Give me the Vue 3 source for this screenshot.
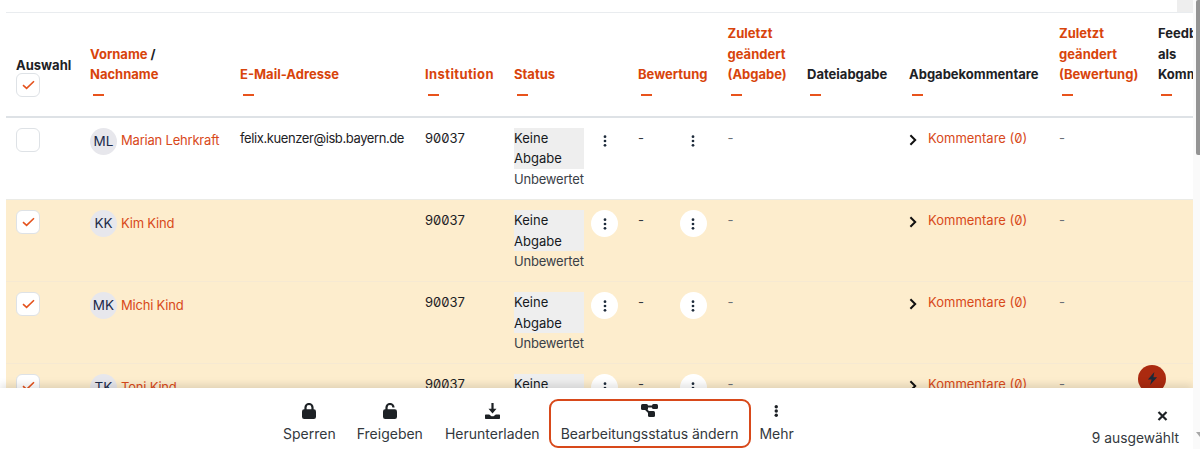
<script setup>
const columns = [
  { lines: ['Auswahl'], kind: 'check' },
  { lines: ['Vorname /', 'Nachname'], link: true },
  { lines: ['E-Mail-Adresse'], link: true },
  { lines: ['Institution'], link: true, spread: true },
  { lines: ['Status'], link: true },
  { lines: ['Bewertung'], link: true },
  { lines: ['Zuletzt', 'geändert', '(Abgabe)'], link: true },
  { lines: ['Dateiabgabe'] },
  { lines: ['Abgabekommentare'] },
  { lines: ['Zuletzt', 'geändert', '(Bewertung)'], link: true },
  { lines: ['Feedback', 'als', 'Kommentar'] },
]
const rows = [
  { initials: 'ML', name: 'Marian Lehrkraft', email: 'felix.kuenzer@isb.bayern.de', selected: false },
  { initials: 'KK', name: 'Kim Kind', email: '', selected: true },
  { initials: 'MK', name: 'Michi Kind', email: '', selected: true },
  { initials: 'TK', name: 'Toni Kind', email: '', selected: true },
]
</script>

<template>
  <div class="page">
    <div class="top-strip"><span class="top-tab"></span></div>
    <div class="table-wrap">
      <table class="grid">
        <colgroup>
          <col class="c1" /><col class="c2" /><col class="c3" /><col class="c4" /><col class="c5" /><col class="c6" />
          <col class="c7" /><col class="c8" /><col class="c9" /><col class="c10" /><col class="c11" />
        </colgroup>
        <thead>
          <tr>
            <th v-for="(col, i) in columns" :key="i" :class="{ spread: col.spread }">
              <div class="th-stack">
                <template v-if="col.kind === 'check'">
                  <div class="th-line">{{ col.lines[0] }}</div>
                  <span class="box head-box">
                    <svg viewBox="0 0 13 10" class="tick"><path d="M1 5.200 4.600 8.400 12 1.200" /></svg>
                  </span>
                </template>
                <template v-else>
                  <div v-for="(line, j) in col.lines" :key="j" class="th-line">
                    <template v-if="line === 'Vorname /'"><span class="orange">Vorname</span> /</template>
                    <span v-else :class="{ orange: col.link }">{{ line }}</span>
                  </div>
                  <span class="sort-dash"></span>
                </template>
              </div>
            </th>
          </tr>
        </thead>
        <tbody>
          <tr v-for="row in rows" :key="row.initials" :class="{ selected: row.selected }">
            <td>
              <span class="box">
                <svg v-if="row.selected" viewBox="0 0 13 10" class="tick"><path d="M1 5.200 4.600 8.400 12 1.200" /></svg>
              </span>
            </td>
            <td>
              <div class="person">
                <span class="avatar">{{ row.initials }}</span>
                <a class="orange-link name">{{ row.name }}</a>
              </div>
            </td>
            <td class="mail">{{ row.email }}</td>
            <td class="inst">90037</td>
            <td>
              <div class="status-cell">
                <div class="status-text">
                  <div class="status-tag">Keine Abgabe</div>
                  <div class="status-sub">Unbewertet</div>
                </div>
                <span class="kebab">
                  <svg viewBox="0 0 4 14" class="dots"><circle cx="2" cy="2" r="1.600" /><circle cx="2" cy="7" r="1.600" /><circle cx="2" cy="12" r="1.600" /></svg>
                </span>
              </div>
            </td>
            <td>
              <div class="grade-cell">
                <span class="dash">-</span>
                <span class="kebab">
                  <svg viewBox="0 0 4 14" class="dots"><circle cx="2" cy="2" r="1.600" /><circle cx="2" cy="7" r="1.600" /><circle cx="2" cy="12" r="1.600" /></svg>
                </span>
              </div>
            </td>
            <td><span class="dash muted">-</span></td>
            <td></td>
            <td>
              <div class="comments">
                <svg viewBox="0 0 8 12" class="chev"><path d="M1.400 1.200 6.200 6 1.400 10.800" /></svg>
                <a class="orange-link">Kommentare (0)</a>
              </div>
            </td>
            <td><span class="dash muted">-</span></td>
            <td></td>
          </tr>
        </tbody>
      </table>
    </div>

    <span class="fab">
      <svg viewBox="0 0 12 14" class="bolt"><path d="M8 0 1 8h4L3.400 14 11 5.600H7z" /></svg>
    </span>

    <div class="action-bar">
      <div class="actions">
        <button class="action">
          <svg viewBox="0 0 14 16" class="icon">
            <rect x="0" y="6.200" width="14" height="9.800" rx="2.200" />
            <path class="line" d="M3.500 7V4.500a3.500 3.500 0 0 1 7 0V7" />
          </svg>
          <span>Sperren</span>
        </button>
        <button class="action">
          <svg viewBox="0 0 14 16" class="icon">
            <rect x="0" y="6.200" width="14" height="9.800" rx="2.200" />
            <path class="line" d="M3.500 7V4.500a3.500 3.500 0 0 1 7 0" />
          </svg>
          <span>Freigeben</span>
        </button>
        <button class="action shift">
          <svg viewBox="0 0 15 16" class="icon wide">
            <path d="M6.400 0h2.200v5.800h2.900L7.500 10.400 3.500 5.800h2.900z" />
            <path d="M1 11.400h3.200l2.300 1.800h2l2.300-1.800H14c.6 0 1 .4 1 1V15c0 .6-.4 1-1 1H1c-.6 0-1-.4-1-1v-2.600c0-.6.4-1 1-1z" />
          </svg>
          <span>Herunterladen</span>
        </button>
        <button class="action outlined">
          <svg viewBox="0 0 17 14" class="icon flow">
            <rect x="0" y="1" width="7" height="6" rx="1.500" />
            <rect x="11" y="1" width="6" height="5" rx="1.500" />
            <rect x="7" y="8" width="7" height="6" rx="1.500" />
            <path class="line thin" d="M6 3.500H12M4.500 6 8.500 10" />
          </svg>
          <span>Bearbeitungsstatus ändern</span>
        </button>
        <button class="action more">
          <svg viewBox="0 0 4.500 12" class="icon dots-big"><circle cx="2.250" cy="1.700" r="1.700" /><circle cx="2.250" cy="6" r="1.700" /><circle cx="2.250" cy="10.300" r="1.700" /></svg>
          <span>Mehr</span>
        </button>
      </div>
      <div class="selection">
        <svg viewBox="0 0 10 10" class="close"><path d="M1 1 9 9M9 1 1 9" /></svg>
        <span>9 ausgewählt</span>
      </div>
    </div>

    <div class="scrollbar">
      <span class="thumb"></span>
      <span class="arrow"></span>
    </div>
  </div>
</template>

<style scoped>
.page {
  position: relative;
  width: 1200px;
  height: 449px;
  overflow: hidden;
  background: #fff;
  font-family: Inter, "Liberation Sans", sans-serif;
  font-size: 13px;
  line-height: 20.5px;
  color: #1d2125;
  font-feature-settings: "zero";
}
.top-strip {
  height: 12px;
  display: flex;
  justify-content: flex-end;
  padding-right: 7px;
}
.top-tab {
  width: 16px;
  background: #eee;
}
.table-wrap {
  margin-left: 6px;
  width: 1187px;
  overflow: hidden;
}
.grid {
  table-layout: fixed;
  border-collapse: collapse;
  width: 1240px;
}
.c1 { width: 74px; }
.c2 { width: 150px; }
.c3 { width: 185px; }
.c4 { width: 89px; }
.c5 { width: 124px; }
.c6 { width: 89.5px; }
.c7 { width: 79.5px; }
.c8 { width: 102px; }
.c9 { width: 150px; }
.c10 { width: 99px; }
.c11 { width: 100px; }
th {
  height: 104px;
  box-sizing: border-box;
  padding: 10px 10px 11px;
  text-align: left;
  vertical-align: bottom;
  border-top: 1px solid #e9ecef;
  border-bottom: 2px solid #dee2e6;
  font-weight: 700;
  white-space: nowrap;
  overflow: hidden;
}
th.spread { letter-spacing: 0.4px; }
.th-stack {
  display: flex;
  flex-direction: column;
  align-items: flex-start;
}
.orange { color: #d8440c; }
.sort-dash {
  width: 11px;
  height: 2px;
  margin: 9px 0 9px 3px;
  background: #e8531c;
}
.box {
  display: flex;
  align-items: center;
  justify-content: center;
  width: 24px;
  height: 24px;
  box-sizing: border-box;
  border: 1px solid #dee2e6;
  border-radius: 6px;
  background: #fff;
}
.head-box { margin-top: -3px; margin-bottom: 8px; }
.tick {
  width: 13px;
  height: 10px;
  fill: none;
  stroke: #e4521d;
  stroke-width: 1.600;
}
td {
  height: 82px;
  box-sizing: border-box;
  padding: 10px 10px 0;
  vertical-align: top;
  border-bottom: 1px solid #ebebe6;
  background: #fff;
}
tr:first-child td { height: 83px; }
.selected td {
  background: #fdedcd;
  border-bottom-color: #f6e9d2;
}
.person {
  display: flex;
  align-items: center;
  gap: 4px;
  white-space: nowrap;
}
.name { letter-spacing: -0.200px; padding-bottom: 1px; }
.avatar {
  display: flex;
  align-items: center;
  justify-content: center;
  width: 27px;
  height: 27px;
  border-radius: 50%;
  background: #e7e7ec;
  color: #1b2a4a;
  font-size: 13.500px;
  flex: none;
}
.orange-link { color: #d8491a; }
.mail { white-space: nowrap; letter-spacing: -0.400px; }
.inst { white-space: nowrap; }
.status-cell {
  display: flex;
  align-items: flex-start;
  gap: 7px;
}
.status-text { width: 70px; }
.status-tag { background: #eee; color: #16191c; }
.status-sub { color: #3a4046; white-space: nowrap; letter-spacing: -0.200px; }
.grade-cell {
  display: flex;
  align-items: flex-start;
  gap: 36px;
}
.dash { color: #33383d; }
.muted { color: #6a7076; }
.kebab {
  display: flex;
  align-items: center;
  justify-content: center;
  width: 27px;
  height: 27px;
  border-radius: 50%;
  flex: none;
  background: #fff;
}
.dots {
  width: 4px;
  height: 12px;
  fill: #1d2a3a;
}
.comments {
  display: flex;
  align-items: flex-start;
  gap: 11px;
}
.chev {
  width: 8px;
  height: 12px;
  margin-top: 6px;
  fill: none;
  stroke: #111;
  stroke-width: 2;
}
.fab {
  position: absolute;
  left: 1138px;
  top: 365px;
  width: 28px;
  height: 28px;
  border-radius: 50%;
  background: #ab2a10;
  display: flex;
  align-items: center;
  justify-content: center;
}
.bolt {
  width: 11px;
  height: 13px;
  margin-top: -1px;
  fill: #1d2a3a;
}
.action-bar {
  position: absolute;
  left: 0;
  top: 388px;
  width: 1193px;
  height: 61px;
  box-sizing: border-box;
  display: flex;
  justify-content: space-between;
  background: #fff;
  box-shadow: 0 -3px 8px rgba(0, 0, 0, 0.120);
  padding: 11px 14px 1px 273px;
}
.actions {
  display: flex;
  gap: 1px;
}
.action {
  display: flex;
  flex-direction: column;
  align-items: center;
  justify-content: flex-start;
  gap: 5px;
  padding: 4px 10px 0;
  border: 0;
  background: none;
  font: inherit;
  font-size: 14px;
  line-height: 20px;
  color: #33383d;
}
.action.shift { margin-left: 1px; }
.action.more { margin-left: -3px; }
.action.outlined {
  border: 2px solid #d8491a;
  border-radius: 9px;
  margin-left: -2px;
  padding: 2px 11px 0 10px;
  letter-spacing: -0.040px;
}
.icon {
  height: 16px;
  width: 14px;
  fill: #1d2125;
}
.line {
  fill: none;
  stroke: #1d2125;
  stroke-width: 2.200;
}
.line.thin { stroke-width: 1.800; }
.icon.wide { width: 15px; }
.icon.flow { width: 17px; height: 14px; margin-bottom: 2px; }
.icon.dots-big { width: 4.500px; height: 12px; margin: 2px 0; }
.selection {
  display: flex;
  flex-direction: column;
  align-items: center;
  gap: 7px;
  padding-top: 11px;
  font-size: 13.800px;
  line-height: 20px;
  color: #33383d;
}
.close {
  width: 11px;
  height: 11px;
  fill: none;
  stroke: #1d2125;
  stroke-width: 2.200;
  margin-left: 54px;
  margin-top: 1px;
}
.scrollbar {
  position: absolute;
  right: 0;
  top: 0;
  width: 7px;
  height: 449px;
  background: #fafafa;
}
.thumb {
  position: absolute;
  right: 0;
  top: 0;
  width: 4px;
  height: 155px;
  background: #949494;
  border-radius: 2px 0 0 2px;
}
.arrow {
  position: absolute;
  right: 0;
  top: 432px;
  border-left: 4px solid transparent;
  border-top: 5px solid #a8a8a8;
}
</style>

<style>
html, body { margin: 0; overflow: hidden; }
</style>
